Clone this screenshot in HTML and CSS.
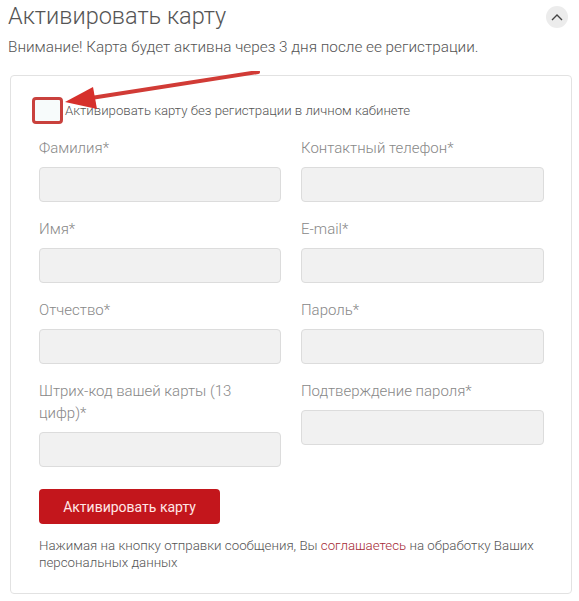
FILE: index.html
```html
<!DOCTYPE html>
<html lang="ru">
<head>
    <meta charset="UTF-8">
    <meta name="viewport" content="width=device-width, initial-scale=1.0">
    <title>Активировать карту</title>
    <link rel="stylesheet" href="styles.css">
</head>
<body>
    <!-- Заголовок блока -->
    <div class="cabecalho">
        <h1>Активировать карту</h1>
        <span class="seta-toggle">
            <svg width="12" height="8" viewBox="0 0 12 8"><path d="M1 7 L6 2 L11 7" fill="none" stroke="#444" stroke-width="1.4"/></svg>
        </span>
    </div>
    <p class="aviso">Внимание! Карта будет активна через 3 дня после ее регистрации.</p>

    <!-- Formulário -->
    <div class="cartao">
        <svg class="flecha" width="270" height="50" viewBox="0 0 270 50">
            <path d="M249 1 L82 27" stroke="#d13b36" stroke-width="4" stroke-linecap="round"/>
            <path d="M56 31 L84 16 L88 38 Z" fill="#d6302c"/>
        </svg>

        <label class="linha-check">
            <span class="caixa"></span>
            <span>Активировать карту без регистрации в личном кабинете</span>
        </label>

        <div class="grade">
            <div class="campo">
                <label>Фамилия*</label>
                <input type="text">
            </div>
            <div class="campo">
                <label>Контактный телефон*</label>
                <input type="text">
            </div>
            <div class="campo">
                <label>Имя*</label>
                <input type="text">
            </div>
            <div class="campo">
                <label>E-mail*</label>
                <input type="text">
            </div>
            <div class="campo">
                <label>Отчество*</label>
                <input type="text">
            </div>
            <div class="campo">
                <label>Пароль*</label>
                <input type="password">
            </div>
            <div class="campo">
                <label>Штрих-код вашей карты (13 цифр)*</label>
                <input type="text">
            </div>
            <div class="campo">
                <label>Подтверждение пароля*</label>
                <input type="password">
            </div>
        </div>

        <button class="botao">Активировать карту</button>

        <p class="rodape">Нажимая на кнопку отправки сообщения, Вы <a href="#">соглашаетесь</a> на обработку Ваших персональных данных</p>
    </div>
</body>
</html>
```

FILE: styles.css
```css
* {
  margin: 0;
  padding: 0;
  box-sizing: border-box;
}

body {
  font-family: Roboto, 'Liberation Sans', sans-serif;
  font-weight: 300;
  background-color: white;
  color: #555;
  padding: 0 8px 0 8px;
}

.cabecalho {
  display: flex;
  justify-content: space-between;
  align-items: center;
  height: 34px;
}

.cabecalho h1 {
  font-size: 23.5px;
  font-weight: 300;
  color: #555;
  margin-top: -3px;
}

.seta-toggle {
  width: 22px;
  height: 22px;
  border-radius: 50%;
  background-color: #ececec;
  display: flex;
  justify-content: center;
  align-items: center;
  margin-right: 3px;
}

.aviso {
  font-size: 15.3px;
  line-height: 26px;
  margin-bottom: 15px;
  color: #555;
}

.cartao {
  position: relative;
  margin-left: 2px;
  width: 562px;
  border: 1px solid #e2e2e2;
  border-radius: 4px;
  padding: 21px 26px 22px 28px;
}

.flecha {
  position: absolute;
  left: -2px;
  top: -5px;
}

.linha-check {
  display: flex;
  align-items: center;
  font-size: 13.2px;
  color: #555;
  height: 26px;
  margin-bottom: 14px;
}

.caixa {
  width: 31px;
  height: 27px;
  border: 3px solid #c9413d;
  border-radius: 4px;
  background-color: #f7fbfb;
  margin-left: -7px;
  margin-right: 2px;
}

.grade {
  display: grid;
  grid-template-columns: 242px 243px;
  column-gap: 20px;
  row-gap: 16px;
  align-items: start;
}

.campo label {
  display: block;
  font-size: 15px;
  line-height: 22px;
  color: #888;
  margin-bottom: 8px;
}

.campo input {
  display: block;
  width: 100%;
  height: 35px;
  background-color: #f1f1f1;
  border: 1px solid #dcdcdc;
  border-radius: 4px;
}

.botao {
  margin-top: 22px;
  width: 181px;
  height: 35px;
  background-color: #c3161c;
  color: #ffe6e6;
  border: none;
  border-radius: 4px;
  font-family: Roboto, 'Liberation Sans', sans-serif;
  font-size: 14px;
  font-weight: 400;
}

.rodape {
  margin-top: 13px;
  font-size: 13.3px;
  line-height: 17px;
  color: #555;
}

.rodape a {
  color: #a52a35;
  text-decoration: none;
}
```
